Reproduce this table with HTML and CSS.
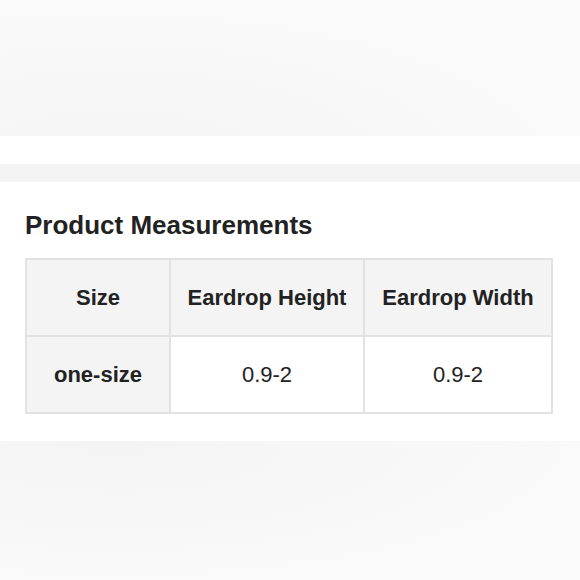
FILE: index.html
```html
<!DOCTYPE html>
<html>
<head>
<meta charset="utf-8">
<link rel="stylesheet" href="styles.css">
</head>
<body>
<div class="top-fade"></div>
<div class="gap"></div>
<div class="divider"></div>
<section class="panel">
  <h2 class="title">Product Measurements</h2>
  <table class="measure">
    <colgroup>
      <col class="c1"><col class="c2"><col class="c3">
    </colgroup>
    <thead>
      <tr><th>Size</th><th>Eardrop Height</th><th>Eardrop Width</th></tr>
    </thead>
    <tbody>
      <tr><th class="rowhead">one-size</th><td>0.9-2</td><td>0.9-2</td></tr>
    </tbody>
  </table>
</section>
<div class="bottom-fade"></div>
</body>
</html>
```
FILE: styles.css
```css
html, body {
  margin: 0;
  padding: 0;
  background: #ffffff;
  font-family: "Liberation Sans", Arial, sans-serif;
  color: #222222;
}
.top-fade {
  height: 136px;
  background: radial-gradient(ellipse at 20% 120%, #f4f4f4 0%, #f8f8f8 45%, #fbfbfb 100%);
}
.gap {
  height: 28px;
}
.divider {
  height: 18px;
  background: #f4f4f4;
}
.panel {
  padding: 28px 25px 0 25px;
  height: 259px;
  box-sizing: border-box;
}
.title {
  margin: 0 0 18px 0;
  font-size: 26px;
  line-height: 30px;
  font-weight: bold;
  color: #222222;
}
.measure {
  border-collapse: collapse;
  width: 526px;
  table-layout: fixed;
}
.c1 { width: 144px; }
.c2 { width: 194px; }
.c3 { width: 188px; }
.measure th, .measure td {
  border: 2px solid #e2e2e2;
  height: 75px;
  padding: 0;
  text-align: center;
  font-size: 22px;
  color: #222222;
}
.measure th {
  background: #f4f4f4;
  font-weight: bold;
}
.measure td {
  background: #ffffff;
  font-weight: normal;
}
.bottom-fade {
  height: 139px;
  background: radial-gradient(ellipse at 20% 0%, #f4f4f4 0%, #f8f8f8 50%, #fbfbfb 100%);
}
```
